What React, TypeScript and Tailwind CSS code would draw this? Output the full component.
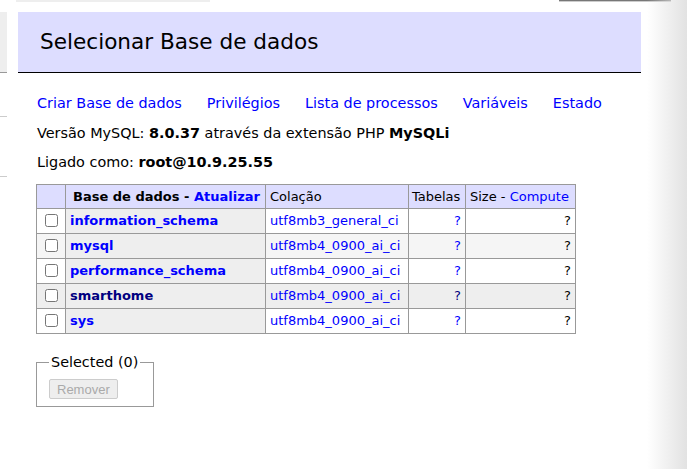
import React from 'react';

type Db = { name: string; collation: string; visited?: boolean };

const DBS: Db[] = [
  { name: 'information_schema', collation: 'utf8mb3_general_ci' },
  { name: 'mysql', collation: 'utf8mb4_0900_ai_ci' },
  { name: 'performance_schema', collation: 'utf8mb4_0900_ai_ci' },
  { name: 'smarthome', collation: 'utf8mb4_0900_ai_ci', visited: true },
  { name: 'sys', collation: 'utf8mb4_0900_ai_ci' },
];

const LINKS = ['Criar Base de dados', 'Privilégios', 'Lista de processos', 'Variáveis', 'Estado'];

function DbRow({ db, index }: { db: Db; index: number }) {
  // row 4 is hovered in the shot, even rows get the zebra tint
  const hover = db.visited;
  const td = hover ? 'bg-[#eeeeee]' : index % 2 === 1 ? 'bg-[#f5f5f5]' : 'bg-white';
  return (
    <tr className="h-[25px]">
      <td className={`${td} border border-[#999999] text-center align-middle`}>
        <input type="checkbox" className="w-[13px] h-[13px] align-middle mt-[-2px]" />
      </td>
      <th className="bg-[#eeeeee] border border-[#999999] text-left px-[4px] font-bold">
        <span className={hover ? 'text-[#000080]' : 'text-[#0000ff]'}>{db.name}</span>
      </th>
      <td className={`${td} border border-[#999999] px-[4px] text-[#0000ff]`}>{db.collation}</td>
      <td className={`${td} border border-[#999999] px-[4px] text-right ${hover ? 'text-[#000080]' : 'text-[#0000ff]'}`}>?</td>
      <td className={`${td} border border-[#999999] px-[4px] text-right`}>?</td>
    </tr>
  );
}

export default function App() {
  return (
    <div className="relative w-[687px] h-[469px] overflow-hidden bg-white text-black font-['DejaVu_Sans',Verdana,sans-serif] text-[14.4px]">
      {/* cropped bits of the menu and search box */}
      <div className="absolute left-[16px] top-0 w-[194px] h-[2px] bg-[#eeeeee]" />
      <div className="absolute left-[559px] top-0 w-[112px] h-[2px] bg-[#777777] border-b border-[#cccccc]" />
      <div className="absolute left-0 top-[12px] w-[7px] h-[61px] bg-[#eeeeee] border-b border-[#999999]" />
      <div className="absolute left-0 top-[116px] w-[7px] h-px bg-[#cccccc]" />
      <div className="absolute left-0 top-[176px] w-[7px] h-px bg-[#cccccc]" />
      <div className="absolute right-0 top-0 w-[40px] h-full bg-gradient-to-r from-white/0 to-[#e2e2e2] pointer-events-none" />

      <div className="ml-[18px] w-[623px] pt-[12px]">
        <h2 className="h-[61px] bg-[#ddddff] border-b border-black pl-[22px] flex items-center text-[21.6px] font-normal">
          Selecionar Base de dados
        </h2>

        <div className="pl-[18px] pt-[21px]">
          <p className="flex gap-[25px] h-[19px] items-center pl-px">
            {LINKS.map((l) => (
              <a key={l} className="text-[#0000ff]">{l}</a>
            ))}
          </p>
          <p className="mt-[11px] h-[19px] leading-[19px] pl-px">
            Versão MySQL: <b>8.0.37</b> através da extensão PHP <b>MySQLi</b>
          </p>
          <p className="mt-[10px] h-[19px] leading-[19px] pl-px">
            Ligado como: <b>root@10.9.25.55</b>
          </p>

          <table className="mt-[12px] w-[539px] table-fixed border-collapse border border-[#999999] text-[13px]">
            <colgroup>
              <col className="w-[29px]" />
              <col className="w-[200px]" />
              <col className="w-[143px]" />
              <col className="w-[57px]" />
              <col className="w-[110px]" />
            </colgroup>
            <thead>
              <tr className="h-[24px] bg-[#ddddff]">
                <td className="border border-[#999999]" />
                <th className="border border-[#999999] pl-[7px] text-left font-bold">
                  Base de dados - <a className="text-[#0000ff]">Atualizar</a>
                </th>
                <td className="border border-[#999999] px-[4px]">Colação</td>
                <td className="border border-[#999999] px-[3px]">Tabelas</td>
                <td className="border border-[#999999] px-[4px]">
                  Size - <a className="text-[#0000ff]">Compute</a>
                </td>
              </tr>
            </thead>
            <tbody>
              {DBS.map((db, i) => (
                <DbRow key={db.name} db={db} index={i} />
              ))}
            </tbody>
          </table>

          <fieldset className="mt-[19px] w-[118px] border border-[#999999] px-[12px] pt-[8px] pb-[7px]">
            <legend className="px-[2px] whitespace-nowrap leading-[18px]">Selected (0)</legend>
            <button
              disabled
              className="block h-[20px] px-[7px] bg-[#eeeeee] border border-[#cccccc] rounded-[2px] text-[#aaaaaa] font-['Liberation_Sans',Arial,sans-serif] text-[13px]"
            >
              Remover
            </button>
          </fieldset>
        </div>
      </div>
    </div>
  );
}
